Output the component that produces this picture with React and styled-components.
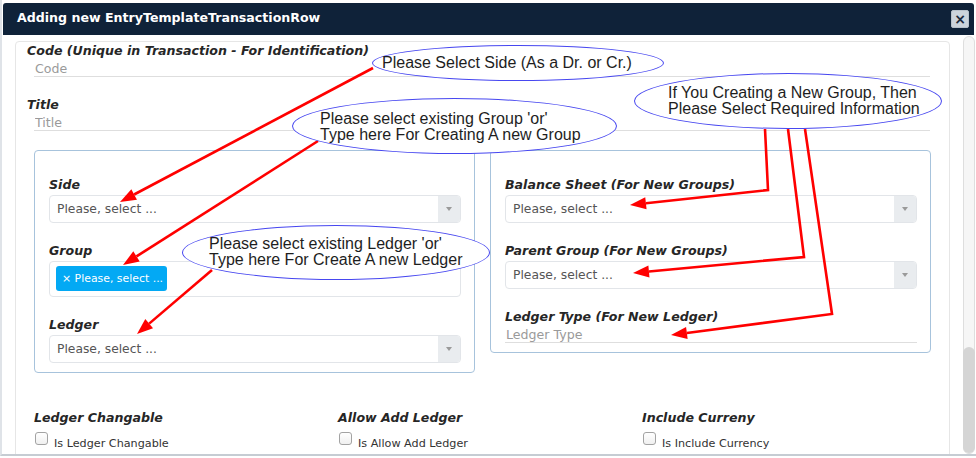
import React from 'react';
import styled, { createGlobalStyle } from 'styled-components';

const GlobalStyle = createGlobalStyle`
  html, body { margin: 0; padding: 0; background: #fff; }
  body { width: 976px; height: 458px; overflow: hidden; font-family: "DejaVu Sans", Verdana, sans-serif; }
  *, *::before, *::after { box-sizing: border-box; }
`;

const Page = styled.div`
  position: relative;
  width: 976px;
  height: 458px;
  overflow: hidden;
`;

const Dialog = styled.div`
  width: 976px;
  height: 456px;
  border-left: 2px solid #dfe3e8;
  border-bottom: 2px solid #c6ccd3;
  display: flex;
  flex-direction: column;
  background: #fff;
`;

const Header = styled.header`
  margin: 3px 2px 0 1px;
  height: 32px;
  flex: none;
  background: #0f2239;
  border-radius: 3px 3px 0 0;
  display: flex;
  align-items: flex-start;
  justify-content: space-between;
  padding: 7px 5px 0 14px;
`;

const HeaderTitle = styled.h1`
  margin: 0;
  font: bold 12.6px/15px "DejaVu Sans", sans-serif;
  color: #fff;
`;

const CloseButton = styled.button`
  width: 18px;
  height: 18px;
  padding: 0;
  border: 1px solid #b7c1cb;
  border-radius: 2px;
  background: #ccd4dc;
  color: #1b2b3d;
  font: bold 14px/14px "DejaVu Sans", sans-serif;
  display: flex;
  align-items: center;
  justify-content: center;
`;

const Body = styled.div`
  flex: 1;
  min-height: 0;
  display: flex;
`;

const Scroller = styled.div`
  flex: 1;
  min-width: 0;
  overflow: hidden;
  padding: 6px 13px 0 13px;
`;

const ScrollTrack = styled.div`
  width: 12px;
  margin: 1px 1px 0 0;
  border: 1px solid #dedede;
  border-radius: 6px;
  background: #f6f6f6;
  display: flex;
  flex-direction: column;
  justify-content: flex-end;
`;

const ScrollThumb = styled.div`
  height: 106px;
  margin: 0 -1px 0 -1px;
  background: #d5d5d5;
  border-radius: 6px;
`;

const Card = styled.div`
  border: 1px solid #e6e6e6;
  border-radius: 4px;
  padding: 1px 18px 40px 11px;
`;

const Field = styled.div`
  margin-top: ${p => p.$mt || 0}px;
`;

const Label = styled.div`
  font: italic bold 12.6px/15px "DejaVu Sans", sans-serif;
  color: #262626;
  white-space: nowrap;
`;

const LineInput = styled.input`
  display: block;
  width: ${p => (p.$inset ? 'calc(100% - 8px)' : '100%')};
  margin: 0 ${p => (p.$inset ? '1px' : '0')} 0 ${p => (p.$inset ? '7px' : '0')};
  height: 19px;
  padding: 3px 1px 0 1px;
  border: 0;
  border-bottom: 1px solid #dedede;
  background: transparent;
  font: 12.6px/15px "DejaVu Sans", sans-serif;
  color: #333;
  outline: none;
  &::placeholder { color: #9a9a9a; }
`;

const PanelsGrid = styled.div`
  display: grid;
  grid-template-columns: 441px 441px;
  gap: 15px;
  align-items: start;
  margin: 19px 0 0 7px;
`;

const GroupPanel = styled.div`
  border: 1px solid #a7c3dc;
  border-radius: 4px;
  padding: 26px 13px 9px 14px;
`;

const PanelField = styled.div`
  & + & { margin-top: 20px; }
`;

const Select = styled.div`
  margin-top: 3px;
  height: 28px;
  display: flex;
  border: 1px solid #e2e5e9;
  border-radius: 4px;
  background: #fff;
  overflow: hidden;
`;

const SelectValue = styled.div`
  flex: 1;
  display: flex;
  align-items: center;
  padding-left: 7px;
  font: 12.3px/15px "DejaVu Sans", sans-serif;
  color: #555;
`;

const SelectArrow = styled.div`
  width: 22px;
  background: #e9ecef;
  display: flex;
  align-items: center;
  justify-content: center;
  &::after {
    content: "";
    border-left: 3.5px solid transparent;
    border-right: 3.5px solid transparent;
    border-top: 4px solid #9a9a9a;
  }
`;

const MultiBox = styled.div`
  margin-top: 3px;
  height: 36px;
  border: 1px solid #e2e5e9;
  border-radius: 4px;
  background: #fff;
  padding: 4px 6px;
`;

const Chip = styled.span`
  display: inline-flex;
  align-items: center;
  width: 111px;
  height: 25px;
  padding: 0 5px 0 6px;
  border-radius: 3px;
  background: #03a9f4;
  color: #fff;
  font: 10.9px/13px "DejaVu Sans", sans-serif;
  white-space: nowrap;
`;

const CheckGrid = styled.div`
  display: grid;
  grid-template-columns: repeat(3, 304px);
  margin: 37px 0 0 7px;
`;

const CheckRow = styled.label`
  display: flex;
  align-items: flex-start;
  gap: 6px;
  margin-top: 7px;
  padding-left: 1px;
`;

const CheckBox = styled.span`
  width: 13px;
  height: 13px;
  border: 1px solid #a3a3a3;
  border-radius: 3px;
  background: linear-gradient(#ffffff, #f0f0f0);
`;

const CheckText = styled.span`
  padding-top: 3px;
  font: 11.2px/17px "DejaVu Sans", sans-serif;
  color: #333;
`;

const Overlay = styled.div`
  position: absolute;
  inset: 0;
  pointer-events: none;
`;

const ArrowLayer = styled.svg`
  position: absolute;
  left: 0;
  top: 0;
`;

const Callout = styled.div`
  position: absolute;
  left: ${p => p.$x}px;
  top: ${p => p.$y}px;
  width: ${p => p.$w}px;
  height: ${p => p.$h}px;
  padding: ${p => p.$pt}px 0 0 ${p => p.$pl}px;
  border: 1px solid #4747f0;
  border-radius: 50%;
  background: #fff;
  font: 16px/16px "Liberation Sans", Arial, sans-serif;
  color: #1e1e1e;
  white-space: pre;
`;

function arrowParts(pts, L = 16, W = 6) {
  const n = pts.length;
  const [tx, ty] = pts[n - 1];
  const [px, py] = pts[n - 2];
  const dx = tx - px;
  const dy = ty - py;
  const len = Math.hypot(dx, dy);
  const ux = dx / len;
  const uy = dy / len;
  const bx = tx - ux * L;
  const by = ty - uy * L;
  const nx = -uy;
  const ny = ux;
  const line = [...pts.slice(0, n - 1), [bx, by]].map(p => p.join(',')).join(' ');
  const head = [[tx, ty], [bx + nx * W, by + ny * W], [bx - nx * W, by - ny * W]]
    .map(p => p.join(','))
    .join(' ');
  return { line, head };
}

const arrows = [
  [[373, 68], [120, 202]],
  [[318, 141], [123, 265]],
  [[212, 270], [137, 334]],
  [[765, 129], [768, 190], [630, 205]],
  [[788, 129], [804, 257], [633, 273]],
  [[805, 129], [832, 314], [671, 335]],
];

const callouts = [
  { x: 372, y: 45, w: 292, h: 36, pt: 9, pl: 9, text: 'Please Select Side (As a Dr. or Cr.)' },
  { x: 292, y: 98, w: 325, h: 56, pt: 12, pl: 27, text: "Please select existing Group 'or'\nType here For Creating A new Group" },
  { x: 634, y: 73, w: 308, h: 56, pt: 11, pl: 33, text: 'If You Creating a New Group, Then\nPlease Select Required Information' },
  { x: 182, y: 225, w: 308, h: 55, pt: 10, pl: 26, text: "Please select existing Ledger 'or'\nType here For Create A new Ledger" },
];

function SelectField({ label }) {
  return (
    <PanelField>
      <Label>{label}</Label>
      <Select>
        <SelectValue>Please, select ...</SelectValue>
        <SelectArrow />
      </Select>
    </PanelField>
  );
}

function CheckField({ label, text }) {
  return (
    <div>
      <Label>{label}</Label>
      <CheckRow>
        <CheckBox />
        <CheckText>{text}</CheckText>
      </CheckRow>
    </div>
  );
}

export default function App() {
  return (
    <Page>
      <GlobalStyle />
      <Dialog>
        <Header>
          <HeaderTitle>Adding new EntryTemplateTransactionRow</HeaderTitle>
          <CloseButton>×</CloseButton>
        </Header>
        <Body>
          <Scroller>
            <Card>
              <Field>
                <Label>Code (Unique in Transaction - For Identification)</Label>
                <LineInput $inset placeholder="Code" />
              </Field>
              <Field $mt={20}>
                <Label>Title</Label>
                <LineInput $inset placeholder="Title" />
              </Field>
              <PanelsGrid>
                <GroupPanel>
                  <SelectField label="Side" />
                  <PanelField>
                    <Label>Group</Label>
                    <MultiBox>
                      <Chip>× Please, select ...</Chip>
                    </MultiBox>
                  </PanelField>
                  <SelectField label="Ledger" />
                </GroupPanel>
                <GroupPanel>
                  <SelectField label="Balance Sheet (For New Groups)" />
                  <SelectField label="Parent Group (For New Groups)" />
                  <PanelField>
                    <Label>Ledger Type (For New Ledger)</Label>
                    <LineInput placeholder="Ledger Type" />
                  </PanelField>
                </GroupPanel>
              </PanelsGrid>
              <CheckGrid>
                <CheckField label="Ledger Changable" text="Is Ledger Changable" />
                <CheckField label="Allow Add Ledger" text="Is Allow Add Ledger" />
                <CheckField label="Include Curreny" text="Is Include Currency" />
              </CheckGrid>
            </Card>
          </Scroller>
          <ScrollTrack>
            <ScrollThumb />
          </ScrollTrack>
        </Body>
      </Dialog>
      <Overlay>
        <ArrowLayer width="976" height="458" viewBox="0 0 976 458">
          {arrows.map((pts, i) => {
            const { line, head } = arrowParts(pts);
            return (
              <g key={i}>
                <polyline points={line} fill="none" stroke="#ff0000" strokeWidth="2.6" strokeLinejoin="miter" />
                <polygon points={head} fill="#ff0000" />
              </g>
            );
          })}
        </ArrowLayer>
        {callouts.map((c, i) => (
          <Callout key={i} $x={c.x} $y={c.y} $w={c.w} $h={c.h} $pt={c.pt} $pl={c.pl}>
            {c.text}
          </Callout>
        ))}
      </Overlay>
    </Page>
  );
}
